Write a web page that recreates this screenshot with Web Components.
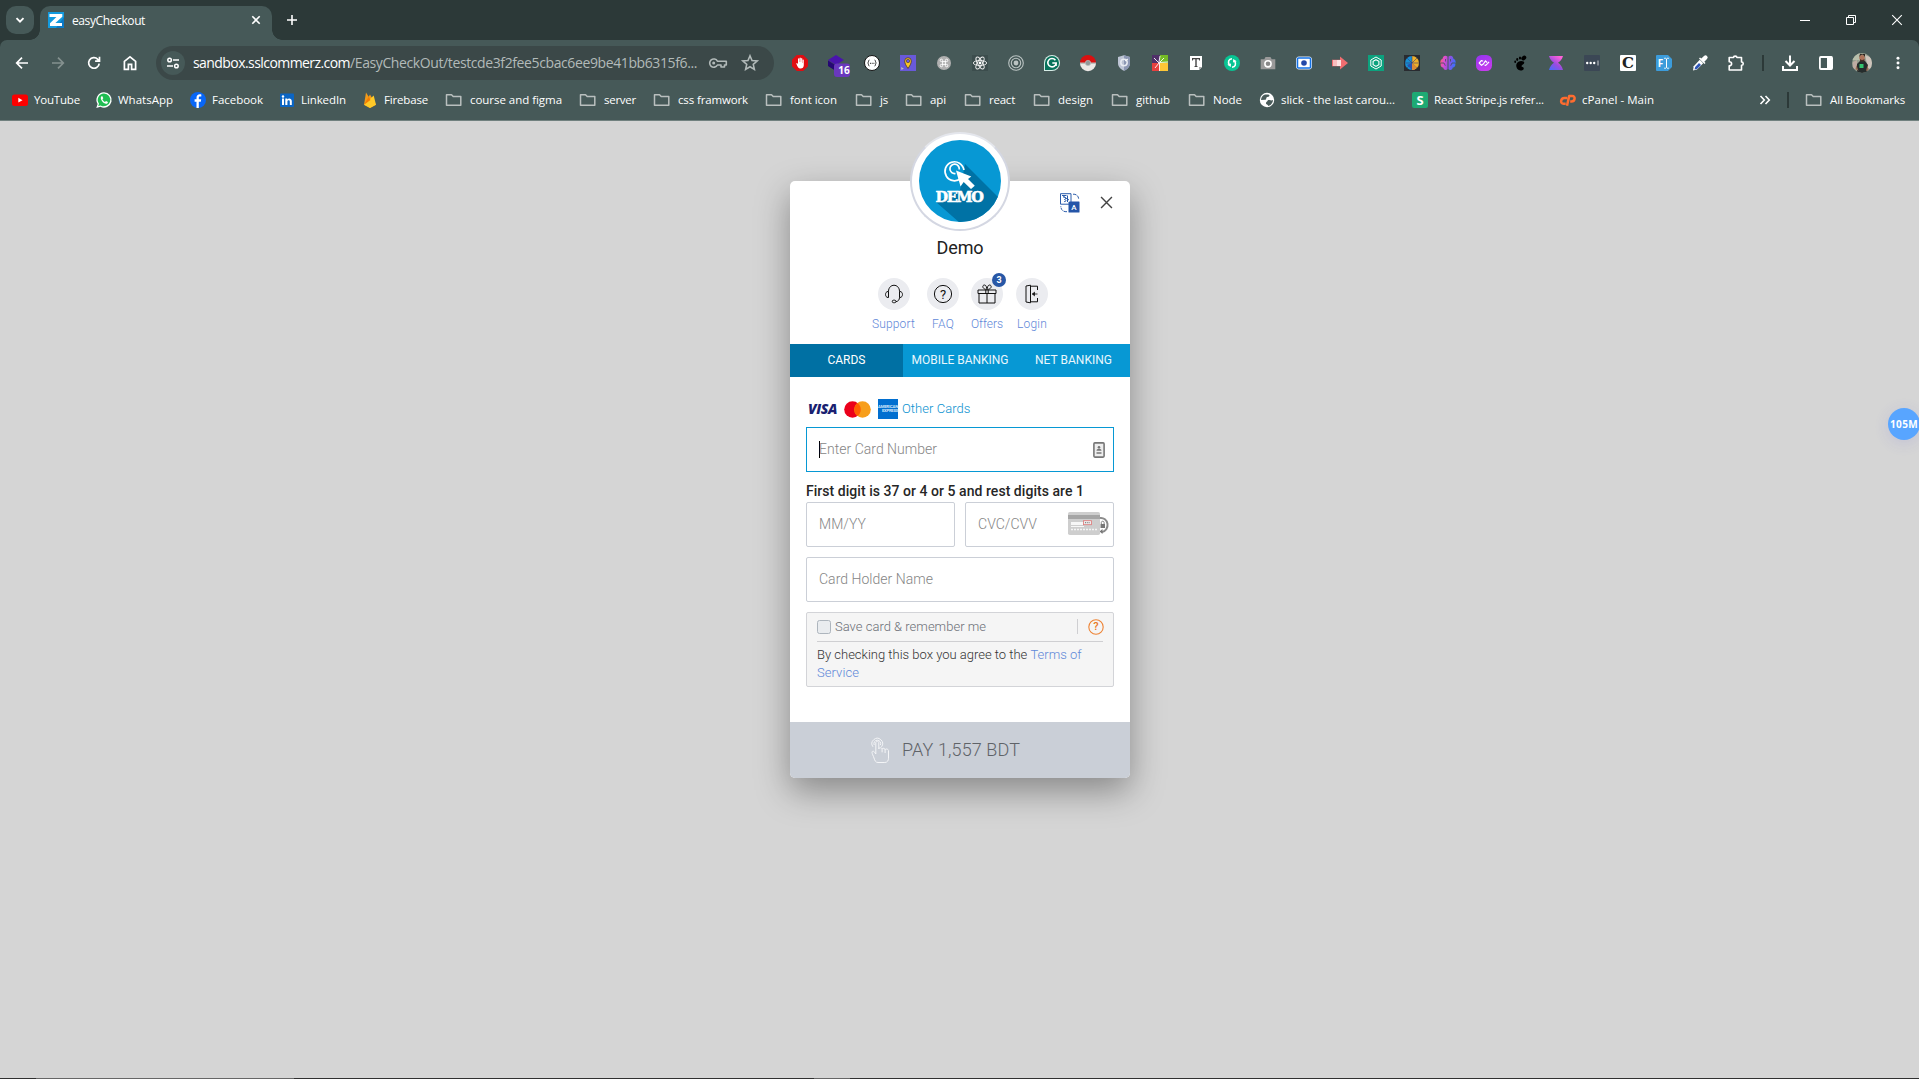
<!DOCTYPE html>
<html lang="en">
<head>
<meta charset="utf-8">
<title>easyCheckout</title>
<style>
html,body{margin:0;height:100%;overflow:hidden;background:#d5d5d5}
body{display:flex;flex-direction:column;font-family:Roboto,"Liberation Sans",sans-serif}
</style>
</head>
<body>
<browser-tabs></browser-tabs>
<browser-toolbar></browser-toolbar>
<bookmark-bar></bookmark-bar>
<checkout-page></checkout-page>
<task-edge></task-edge>
<script>
const P = (d, extra='') => `<path d="${d}" ${extra}/>`;
const line = 'fill="none" stroke="currentColor" ';
const ICONS = {
 chevron: ['0 0 16 16', P('M4.5 6.2 8 9.7l3.5-3.5', line+'stroke-width="1.9"')],
 z: ['0 0 16 16', '<rect width="16" height="16" fill="#139bdf"/><path d="M8 16h8V5z" fill="#0a79c5"/>'+P('M1.5 2h12.8v2.7L7.4 11H14v3H2v-2.7L8.4 5H1.5z','fill="#fff"')],
 x: ['0 0 16 16', P('M4.3 4.3l7.4 7.4M11.7 4.3l-7.4 7.4', line+'stroke-width="1.6"')],
 plus: ['0 0 16 16', P('M8 3v10M3 8h10', line+'stroke-width="1.6"')],
 min: ['0 0 16 16', P('M3 8.5h10', line+'stroke-width="1"')],
 max: ['0 0 16 16', P('M3.5 5.5h7v7h-7zM5.5 5.5v-2h7v7h-2', line+'stroke-width="1"')],
 wclose: ['0 0 16 16', P('M3.2 3.2l9.6 9.6M12.8 3.2l-9.6 9.6', line+'stroke-width="1.1"')],
 back: ['0 0 16 16', P('M14 8H3M8 2.7 2.7 8 8 13.3', line+'stroke-width="1.7"')],
 fwd: ['0 0 16 16', P('M2 8h11M8 2.7 13.3 8 8 13.3', line+'stroke-width="1.7"')],
 reload: ['0 0 16 16', P('M13.2 8.6A5.3 5.3 0 1 1 11.8 4.3L13.2 5.7M13.5 1.8v4.4H9.1', line+'stroke-width="1.7"')],
 home: ['0 0 16 16', P('M2.4 14.3V6.3L8 1.9l5.6 4.4v8h-4V9.4H6.4v4.9z', line+'stroke-width="1.7"')],
 tune: ['0 0 16 16', '<g '+line+'stroke-width="1.5"><circle cx="4.6" cy="5" r="1.8"/><path d="M8 5h6M2 11h6"/><circle cx="11.4" cy="11" r="1.8"/></g>'],
 key: ['0 0 20 16', P('M9.4 6.2A4.1 4.1 0 1 0 9.4 10H13v2h3.5v-2h1.8V6.2z', line+'stroke-width="1.6" stroke-linejoin="round"')+'<circle cx="5.7" cy="8" r="1.5" fill="currentColor"/>'],
 star: ['0 0 16 16', P('M8 1.6l1.8 4.2 4.6.4-3.5 3 1 4.5L8 11.3l-3.9 2.4 1-4.5-3.5-3 4.6-.4z', line+'stroke-width="1.4"')],
 adblock: ['0 0 16 16', P('M4.8 0h6.4L16 4.8v6.4L11.2 16H4.8L0 11.2V4.8z','fill="#e00d12"')+P('M4.2 8.5 5 8l1 1V3.8a.7.7 0 0 1 1.2 0V7h.3V3a.7.7 0 0 1 1.3 0v4h.3V3.6a.7.7 0 0 1 1.2 0V8h.3V5.2a.6.6 0 0 1 1.2 0v5c0 2-1.3 3.3-3.2 3.3-2 0-2.8-1.2-4.4-5z','fill="#fff"')],
 layers: ['0 0 24 24', P('M8 0l8 5-8 5-8-5z','fill="#4a14ad"')+P('M0 7l8 5V16L0 11z','fill="#210470"')+P('M0 5.500l8 5 3-2v5l-3 2-8-5z','fill="#260775"')+'<rect x="6" y="8.500" width="16" height="13.500" rx="3" fill="#6a38bd"/>'],
 braces: ['0 0 16 16','<circle cx="8" cy="8" r="7.500" fill="#fff" stroke="#151515"/><path d="M5.400 5c-1.300 0-.4 2.200-1.700 3 1.300.8.4 3 1.700 3M10.600 5c1.300 0 .4 2.200 1.700 3-1.300.8-.4 3-1.700 3" fill="none" stroke="#222" stroke-width=".9"/><path d="M6 8.300h4.400" stroke="#222" stroke-dasharray="1 .7"/>'],
 pin: ['0 0 16 16','<rect width="16" height="16" fill="#6959d9"/><path d="M8 13.5C5.7 10 4.7 8.3 4.7 6a3.3 3.3 0 0 1 6.6 0c0 2.3-1 4-3.3 7.5z" fill="#fbc723" stroke="#4c3826" stroke-width=".8"/><circle cx="8" cy="6" r="1.7" fill="#6959d9" stroke="#4c3826" stroke-width=".6"/><path d="M1 12l2.8 1.5L1.5 15z" fill="#bbb"/>'],
 cmd: ['0 0 16 16','<circle cx="8" cy="8" r="7" fill="#b0b0b0"/><path d="M6.600 6.600H5.400a1.200 1.200 0 1 1 1.200-1.200v5.200A1.200 1.200 0 1 1 5.400 9.400h5.200A1.200 1.200 0 1 1 9.400 10.600V5.400A1.200 1.200 0 1 1 10.600 6.600z" fill="none" stroke="#fff" stroke-width=".9"/>'],
 react: ['0 0 16 16','<rect width="16" height="16" fill="#3c4d4d"/><g fill="none" stroke="#f2f2f2" stroke-width=".9"><ellipse cx="8" cy="8" rx="6.7" ry="2.5"/><ellipse cx="8" cy="8" rx="6.7" ry="2.5" transform="rotate(60 8 8)"/><ellipse cx="8" cy="8" rx="6.7" ry="2.5" transform="rotate(120 8 8)"/></g><circle cx="8" cy="8" r="1.4" fill="#fff"/>'],
 target: ['0 0 16 16','<g fill="none" stroke="#bac3c2" stroke-width="1.1"><circle cx="8" cy="8" r="7.3"/><circle cx="8" cy="8" r="4.7"/></g><circle cx="8" cy="8" r="2.4" fill="#bac3c2"/>'],
 gram: ['0 0 16 16','<path d="M8 0a8 8 0 1 1 0 16H0V8a8 8 0 0 1 8-8z" fill="#d7ece6"/><path d="M8 1a7 7 0 1 1 0 14H1V8a7 7 0 0 1 7-7z" fill="#08725b"/><path d="M11.4 5.2A4.2 4.2 0 1 0 12.2 8H8.3M12.2 8l-.2 3" fill="none" stroke="#fff" stroke-width="1.6"/>'],
 poke: ['0 0 16 16','<path d="M0 8a8 8 0 0 1 16 0z" fill="#da1010"/><path d="M0 8.2a8 8 0 0 0 16 0z" fill="#ece8e6"/><path d="M0 8h16" stroke="#bababa"/><circle cx="8" cy="8" r="2.7" fill="#929899" stroke="#ccc" stroke-width=".5"/>'],
 shield: ['0 0 16 16','<path d="M8 .2 14 2v6c0 4-2.7 6.2-6 7.8C4.700 14.200 2 12 2 8V2z" fill="#bec5d5"/><path d="M8 .2 14 2v6c0 4-2.700 6.200-6 7.800z" fill="#8c97b3"/><circle cx="8" cy="7.500" r="3.200" fill="none" stroke="#e8ebf2" stroke-width="1.500"/><path d="M9 6l3-2" stroke="#fff"/>'],
 dots4: ['0 0 16 16','<path d="M0 0h8v8H0z" fill="#503069"/><path d="M8 0h8v8H8z" fill="#75bb26"/><path d="M0 8h8v8H0z" fill="#e7403f"/><path d="M8 8h8v8H8z" fill="#fec737"/><path d="M7 8 2 3M7 7l1-6M8 7l4-4M7 7.500l9-.5M7 8l-4 5M7.500 8v8" stroke="#fff" stroke-width=".9"/>'],
 tnote: ['0 0 16 16','<path d="M2 1h12v11l-3 3H2z" fill="#fff"/><path d="M14 12h-3v3z" fill="#aaa"/><path d="M4 3h8v2.500h-.8l-.5-1.300H8.700V11l1 .5v.6H6.300v-.6l1-.5V4.200H5.300l-.5 1.300H4z" fill="#444"/>'],
 sync: ['0 0 16 16','<circle cx="8" cy="8" r="8" fill="#08c493"/><g fill="none" stroke="#fff" stroke-width="1.600"><path d="M8 3.700C4.500 4 3.700 7 5.300 9.800M8 12.300c3.500-.3 4.300-3.300 2.700-6.100"/></g><path d="M3.300 9.700 7 8.500 6.800 12zM12.700 6.300 9 7.500 9.200 4z" fill="#fff"/>'],
 cam: ['0 0 16 16','<path d="M.7 4.200h3.600L5.500 2h5l1.200 2.200h3.600v10H.7z" fill="#9a9a9a"/><circle cx="8" cy="8.800" r="3.100" fill="#888" stroke="#fff" stroke-width="1.600"/>'],
 rec: ['0 0 16 16','<rect x=".6" y="2" width="14.800" height="12" rx="2" fill="#fff" stroke="#e5eefb"/><rect x="1.500" y="3" width="13" height="10" rx="1" fill="#fff" stroke="#1372e6" stroke-width="1.500"/><circle cx="8" cy="8" r="2.800" fill="#2348a8"/>'],
 rarrow: ['0 0 16 16','<path d="M0 4.700h8V1.500L16 8l-8 6.500v-3.200H0z" fill="#f16d70"/><path d="M1 5h4v6H1z" fill="#fff" opacity=".55"/><path d="M5 5h4v6H5z" fill="#fff" opacity=".8"/>'],
 gpt: ['0 0 16 16','<rect width="16" height="16" fill="#0ca27e"/><path d="M8 2l5.200 3v6L8 14l-5.200-3V5z" fill="none" stroke="#fff" stroke-width="1"/><path d="M8 4.700l2.900 1.700v3.300L8 11.400 5.100 9.700V6.400z" fill="none" stroke="#fff" stroke-width="1.100"/>'],
 ball: ['0 0 16 16','<rect width="16" height="16" fill="#292b30"/><path d="M8 1v14A7 7 0 0 1 8 1z" fill="#168ed2"/><path d="M8 1v14A7 7 0 0 0 8 1z" fill="#edb12b"/><path d="M3 3l10 10M13 3L3 13M1 8h14M8 1v14" stroke="#3d3e71" stroke-width=".6"/><path d="M8 8l5 4-3 3H8z" fill="#d78a37"/><path d="M3 10l5-2v7z" fill="#2751b0"/>'],
 brain: ['0 0 16 16','<defs><linearGradient id="b" x1="0" x2="1" y2=".2"><stop stop-color="#fc655a"/><stop offset=".3" stop-color="#de4ed0"/><stop offset=".6" stop-color="#994bdd"/><stop offset="1" stop-color="#406ffb"/></linearGradient></defs><path d="M7.500 1.500C5 0 3 1 2.700 3.500.5 4.500-.2 7 .8 8.500 0 11 2 12.500 3.200 12.500 4 15.500 6.500 15.500 7.500 14zM8.500 1.500C11 0 13 1 13.300 3.500c2.200 1 2.900 3.500 1.900 5 .8 2.500-1.200 4-2.400 4-.8 3-3.300 3-4.300 1.500z" fill="url(#b)"/><path d="M5.500 4v2.500M1 8h3l1.300 2.700M10.500 4v2.500M15 8h-3l-1.300 2.700" fill="none" stroke="#42505a" stroke-width=".8"/>'],
 loop: ['0 0 16 16','<defs><linearGradient id="l" x2=".4" y2="1"><stop stop-color="#9334ef"/><stop offset="1" stop-color="#c43cee"/></linearGradient></defs><rect width="16" height="16" rx="5.500" fill="url(#l)"/><path d="M7.200 6.200 5.500 5.500 3.200 8l2.300 2.300L7.300 9 9.500 5.800 11 7.500M8.500 10l1.200.4 1.800-1.800L13 6.800" fill="none" stroke="#fff" stroke-width="1.200" stroke-linejoin="round"/>'],
 foot: ['0 0 16 16','<g fill="#000"><ellipse cx="11.800" cy="3" rx="2.700" ry="2.100" transform="rotate(-40 11.800 3)"/><ellipse cx="8" cy="3" rx="1.100" ry="1.600"/><ellipse cx="5.200" cy="4.500" rx="1" ry="1.400"/><ellipse cx="3.200" cy="6.700" rx=".9" ry="1.200"/><path d="M11.500 6.500C9 5 5.500 6.500 4.500 9c-1 3 1 6.500 4 6.500 2 0 3.500-1 3.200-2.500-.4-1.200-2-.5-2.200-1.700-.3-1.800 4.600-2.800 2-4.800z"/></g>'],
 hour: ['0 0 16 16','<defs><linearGradient id="h" y1="1" x2=".7" y2="0"><stop stop-color="#416dff"/><stop offset=".5" stop-color="#9a4be0"/><stop offset="1" stop-color="#ff62d9"/></linearGradient></defs><path d="M1 1h14C14 4.500 12.500 6 10 7.800 12.500 9.500 14 11.500 15 15H1c1-3.500 2.500-5.500 5-7.200C3.500 6 2 4.500 1 1z" fill="url(#h)"/>'],
 pass: ['0 0 16 16','<rect width="16" height="16" rx="1" fill="#3b4755"/><g fill="#fff"><circle cx="3.200" cy="8" r="1.200"/><circle cx="6.700" cy="8" r="1.200"/><circle cx="10.200" cy="8" r="1.200"/><path d="M13.500 5.500h1v5h-1z" opacity=".7"/></g>'],
 cbox: ['0 0 16 16','<rect width="16" height="16" rx="1" fill="#fff"/>'],
 fi: ['0 0 16 16','<path d="M1 0h11l4 4v8l-4 4H1a1 1 0 0 1-1-1V1a1 1 0 0 1 1-1z" fill="#3c9cdb"/><path d="M8.200 3.300h1.500l.8.700.8-.7h1.500M8.200 13.200h1.500l.8-.7.8.7h1.500M10.500 4v8.500" fill="none" stroke="#fff" stroke-width="1"/>'],
 dropper: ['0 0 16 16','<path d="M7.800 4.800 11.200 8.200 5 14.500 1 15.500 1.700 11.300z" fill="#fff"/><path d="M7 8l2 2-4 4-2.500.5.700-2.500z" fill="#2d55b8"/><path d="M7 3.500 12.500 9l1-1-1.200-1.200L15 4a2 2 0 0 0-3-3L9.300 3.600 8 2.500z" fill="#fff"/>'],
 puzzle: ['0 0 16 16', P('M1.200 2.500h4.300C5.500.6 8.900.6 8.900 2.500h4.600V7c2.300 0 2.300 3.300 0 3.300V15H1.200v-4.200c3.200 0 3.200-4 0-4z', line+'stroke-width="1.600" stroke-linejoin="round"')],
 download: ['0 0 16 16', P('M8 .5v10M3.500 6 8 10.500 12.500 6M1 11v4h14v-4', line+'stroke-width="2"')],
 panel: ['0 0 16 16', '<rect x="1.900" y="2" width="12.200" height="12" rx="1" '+line+'stroke-width="1.800"/><path d="M9 1.500h5v13H9z" fill="currentColor"/>'],
 avatar: ['0 0 20 20','<defs><clipPath id="av"><circle cx="10" cy="10" r="10"/></clipPath></defs><g clip-path="url(#av)"><path d="M0 0h20v20H0z" fill="#98a190"/><path d="M0 0h8v7H0z" fill="#b9c0ac"/><path d="M1 9l4-2v9H0z" fill="#bdaca3"/><path d="M13 2l7 3v12l-4-2z" fill="#cec4bb"/><path d="M5 20V11l3-3h5l3 4-1 8z" fill="#252c2c"/><circle cx="10" cy="4.700" r="2.800" fill="#ae735a"/><path d="M7 4q3.500-5 6 0v-3H8z" fill="#302720"/><path d="M8 6q2 2 4.500 0v2.500H8z" fill="#463027"/><path d="M7.500 11h4v4h-4z" fill="#34c46f"/><path d="M4.500 12l2 6-3-2zM15.500 12l1 5-2.500 1z" fill="#976b54"/></g>'],
 dots: ['0 0 16 16','<g fill="currentColor"><circle cx="8" cy="2.500" r="1.700"/><circle cx="8" cy="8" r="1.700"/><circle cx="8" cy="13.500" r="1.700"/></g>'],
 youtube: ['0 0 16 16','<rect y="2.500" width="16" height="11.500" rx="2.500" fill="#fb0000"/><path d="M6.300 5.800 10.500 8.200 6.300 10.600z" fill="#fff"/>'],
 whatsapp: ['0 0 16 16','<path d="M8 .2A7.700 7.700 0 1 1 4.400 14.700L.3 16l1.300-4A7.700 7.700 0 0 1 8 .2z" fill="#fff"/><path d="M8 1.500A6.400 6.400 0 1 1 4.600 13.400L2.200 14.100 3 11.700A6.400 6.400 0 0 1 8 1.500z" fill="#20bd52"/><path d="M5.700 4.300c-2.300 1 .1 6.800 4.200 7.500 1.300.1 2.100-.8 2-1.900L10 9l-1 1c-1.300-.5-2.200-1.500-2.600-2.700l.9-1-.9-2z" fill="#fff"/>'],
 facebook: ['0 0 16 16','<circle cx="8" cy="8" r="8" fill="#0866f6"/><path d="M6.500 16V9.800H4.600V7.300h1.900V6c0-2.600 1.300-3.700 3.300-3.700.8 0 1.200.1 1.500.2v2.100H10c-.9 0-1.200.4-1.200 1.300v1.400h2.400l-.4 2.500h-2V16z" fill="#fff"/>'],
 linkedin: ['0 0 16 16','<rect x="1" y="1.500" width="14" height="13.500" rx="1" fill="#0b65c3"/><g fill="#fff"><path d="M3 6.500h2V13H3zM6.300 6.500h2v.9c1.200-1.700 4.500-1.200 4.500 1.700V13h-2V9.500c0-1.700-2.400-1.700-2.400 0V13H6.300z"/><circle cx="4" cy="4.500" r="1.200"/></g>'],
 firebase: ['0 0 16 16','<path d="M2 12.700 4 .5l2.700 4.200L8 2.500l6 10.200-6 3.200z" fill="#f29a19"/><path d="M2 12.700 11.700 3.500 14 12.700 8 16z" fill="#ffca28"/><path d="M2 12.700 6.700 4.700 8.500 8z" fill="#f57c00"/>'],
 folder: ['0 0 18 16', P('M1.500 2.700h5l1.700 1.900h7.600v8.600H1.500z', line+'stroke-width="1.500" stroke-linejoin="round"')],
 globe: ['0 0 16 16','<circle cx="8" cy="8" r="7.200" fill="#fff"/><path d="M6 2.500c2 .3 4-.5 4.500 1-.3 1.800-2.500 1-3 2.200-.7 1 .2 1.700-1.200 2L2 8c.2-2.800 1.700-4.800 4-5.500zM9 8c2.500-.3 3 1 5 0-.2 3-2 5.300-4.700 6-.3-2-2.500-1-2.300-3 .2-1.500 1-.7 2-3z" fill="#4a5c5b"/>'],
 sbox: ['0 0 16 16','<rect width="16" height="16" rx="2" fill="#1eaa74"/>'],
 cp: ['0 0 16 16','<g fill="none" stroke="#ff6c2f" stroke-width="2.500" stroke-linejoin="round"><path d="M7.200 6H4.400C.5 6-.1 11.800 3.500 11.800h2.200M7 13.700 9.200 4h3c3.800 0 2.800 5.600-.8 5.600h-1.200"/></g>'],
 more: ['0 0 16 16', P('M3.500 4 7.300 8l-3.800 4M8.500 4l3.800 4-3.800 4', line+'stroke-width="1.600"')],
 demo: ['0 0 82 82','<defs><clipPath id="dc"><circle cx="41" cy="41" r="41"/></clipPath></defs><g clip-path="url(#dc)"><path d="M0 0h82v82H0z" fill="#0798d4"/><path d="M46 24 L84 62V90H49L17 62l24-12z" fill="#0072a5"/></g><g fill="none" stroke="#fff" stroke-width="1.700"><path d="M42.500 38.200A9.500 9.500 0 1 1 45.400 30" transform="translate(-.5 0)"/><path d="M36.500 33.500A4.700 4.700 0 1 1 40.300 29.500"/></g><path d="M37 30.500 41.500 46.500 44.700 42 52 49 55.800 45.700 49 39 52.300 36.600z" fill="#fff"/>'],
 translate: ['0 0 20 20','<g fill="none" stroke="#2b5caa" stroke-width="1"><path d="M.5.700h10.500v10.500H.5zM2 2.500h4.500M7.500 2.500v6.500M3 4c3-.5 3.500 2 1.500 2.500 2 .2 2 2.500-.5 2M3.500 3.500 9 7"/><path d="M13 1.200c3.600-.2 5.700 2 5.700 5.300M7 18.700c-4 .3-6.200-2-6.200-5.700" stroke-dasharray="3.500 1"/></g><path d="M9.500 8.500H19a.5.500 0 0 1 .5.500v10a.5.500 0 0 1-.5.500H9a.5.500 0 0 1-.5-.5V9.500z" fill="#2455a8"/>'],
 close: ['0 0 16 16', P('M2.200 2.200l11.600 11.600M13.800 2.200 2.200 13.800', 'fill="none" stroke="#444" stroke-width="1.500"')],
 headset: ['0 0 20 20', P('M4.500 13.500H4C.7 13.500.7 7.500 4 7.500h.5zM15.500 7.500h.5c3.300 0 3.300 6 0 6h-.5zM4.500 7.500c0-8.300 11-8.300 11 0M15.500 13.500c0 2.300-1.300 3.800-3.500 4.200', line+'stroke-width="1"')+'<rect x="8.300" y="16.200" width="3.600" height="2.500" rx="1.200" '+line+'/>'],
 faq: ['0 0 20 20', '<circle cx="10" cy="10" r="8.600" '+line+'stroke-width="1"/>'],
 gift: ['0 0 20 20', P('M1 6h18v3.500H1zM2 9.500h16V19H2zM10 9.500V19M9.500 5.500C5 5 5 1 7.500 1 9.300 1 9.800 4 10 5.500 10.200 4 10.700 1 12.500 1c2.500 0 2.500 4-2 4.500M8.800 6v3.500M11.200 6v3.500', line+'stroke-width="1"')],
 door: ['0 0 20 20', P('M4 2 8.500 1.200v17.600L4 18zM9 2.200h6.500V6M9 17.800h6.500V14', line+'stroke-width="1"')+P('M10 10H15.500M12.500 8.200 10.500 10l2 1.800z','fill="currentColor" stroke="currentColor" stroke-width=".800"')],
 mc: ['0 0 27 17','<circle cx="8.500" cy="8.500" r="8.300" fill="#eb001b"/><circle cx="18.500" cy="8.500" r="8.300" fill="#f79e1b"/><path d="M13.500 1.900a8.300 8.300 0 0 1 0 13.200 8.300 8.300 0 0 1 0-13.200z" fill="#ff5f00"/>'],
 contact: ['0 0 12 16','<rect x=".9" y=".9" width="10.200" height="14.200" rx="1" fill="#eee" stroke="#777" stroke-width="1.600"/><circle cx="6" cy="5.300" r="1.300" fill="#777"/><path d="M3.500 8.700c0-2.600 5-2.600 5 0zM3.500 10.200h5v1.500h-5z" fill="#777"/>'],
 cvv: ['0 0 42 26','<path d="M32 6A6.500 7 0 1 1 34 20" fill="none" stroke="#8b8b8b" stroke-width="2"/><path d="M34.500 17v5l-3-2.500z" fill="#777"/><rect width="32" height="23" rx="1.800" fill="#cecece"/><path d="M0 3h32v4H0z" fill="#a5a5a5"/><path d="M3 10h13v3H3zM3 14h13v1H3z" fill="#f7f7f7"/><path d="M3 17.500h26" stroke="#f5f5f5" stroke-width="1.500" stroke-dasharray="2 1"/><rect x="15.500" y="8.700" width="8" height="4" fill="#eee" stroke="#de7777" stroke-width=".800"/><path d="M17 10.700h5" stroke="#888" stroke-width="1.200" stroke-dasharray="1 .8"/><path d="M32.500 12h4.500v4h-4.500z" fill="#777"/><path d="M33.300 12v-1.500c0-1.700 2.800-1.700 2.800 0V12" fill="none" stroke="#777" stroke-width=".900"/>'],
 help: ['0 0 16 16','<circle cx="8" cy="8" r="7.200" fill="none" stroke="#ee8334" stroke-width="1.100"/>'],
 tap: ['0 0 20 26','<g fill="none" stroke="#f4f5f7" stroke-width="1"><path d="M5.800 17V5.800c0-2 3-2 3 0V12c0-1.700 3.300-1.700 3.300.3 0-1.600 3-1.400 3 .6 0-1.500 3.400-1.200 3.400.8v7.500c0 2.400-1.300 4.300-3.700 4.300H8c-2.500 0-3.200-2-4-4.500-.8-2.300-2-4.500-2-5.700 0-1.500 2-1.500 2.700.2z"/><path d="M12.100 12.300v3M15.100 13v3M3 9.800A5.300 5.300 0 1 1 11.500 9.800M4.200 8a3.400 3.400 0 1 1 6.200 0"/></g>']
};
class UiIcon extends HTMLElement{
 connectedCallback(){
  if(this.shadowRoot) return;
  const [vb,body]=ICONS[this.getAttribute('name')];
  const w=this.getAttribute('w')||16,h=this.getAttribute('h')||w;
  const ch=this.getAttribute('text');
  this.attachShadow({mode:'open'}).innerHTML=`<style>:host{display:grid;flex:none;width:${w}px;height:${h}px;place-items:center}svg,span{grid-area:1/1;display:block}svg{overflow:visible}span{line-height:1;z-index:1}</style><svg width="${w}" height="${h}" viewBox="${vb}">${body}</svg>${ch?`<span style="${this.getAttribute('tstyle')||''}">${ch}</span>`:''}`;
 }
}
/* Single-line label that adjusts its tracking to fill a given width. */
class FitText extends HTMLElement{
 connectedCallback(){
  if(this.shadowRoot) return;
  this.attachShadow({mode:'open'}).innerHTML='<style>:host{display:block;flex:none;white-space:pre}span{display:inline-block}</style><span><slot></slot></span>';
  const s=this.shadowRoot.querySelector('span'),w=+this.getAttribute('w'),n=this.textContent.length;
  this.style.width=w+'px';
  s.style.letterSpacing=((w-s.getBoundingClientRect().width)/n).toFixed(3)+'px';
 }
}
const define=(name,css,html)=>customElements.define(name,class extends HTMLElement{
 connectedCallback(){ if(!this.shadowRoot) this.attachShadow({mode:'open'}).innerHTML=`<style>*{box-sizing:border-box}${css}</style>${html}`; }
});
const ui='font-family:"Open Sans","Noto Sans",sans-serif;';

define('browser-tabs',`:host{display:flex;height:40px;flex:none;background:#2c3938;color:#fff;${ui}padding-left:6px;box-sizing:border-box}
.s{width:28px;height:28px;border-radius:10px;background:#465958;display:grid;place-items:center;margin:6px 6px 0 0}
.t{position:relative;width:232px;height:34px;margin-top:6px;border-radius:10px 10px 0 0;background:#465958;display:flex;align-items:center;padding:0 8px 6px;font-size:12px}
.t fit-text{margin:1px auto 0 8px}
.t:before,.t:after{content:"";position:absolute;bottom:0;width:10px;height:10px}
.t:before{left:-10px;background:radial-gradient(circle at 0 0,transparent 9.5px,#465958 10px)}
.t:after{right:-10px;background:radial-gradient(circle at 100% 0,transparent 9.5px,#465958 10px)}
.p{margin:12px auto 0 12px}.w{display:flex;gap:30px;padding:12px 14px 0 0}`,
`<div class="s"><ui-icon name="chevron"></ui-icon></div><div class="t"><ui-icon name="z"></ui-icon><fit-text w="73">easyCheckout</fit-text><ui-icon name="x"></ui-icon></div><ui-icon class="p" name="plus"></ui-icon><div class="w"><ui-icon name="min"></ui-icon><ui-icon name="max"></ui-icon><ui-icon name="wclose"></ui-icon></div>`);

const ext=['adblock','layers','braces','pin','cmd','react','target','gram','poke','shield','dots4','tnote','sync','cam','rec','rarrow','gpt','ball','brain','loop','foot','hour','pass','cbox','fi','dropper','puzzle'];
const extra={cbox:'text="C" tstyle="font:bold 15px \'DejaVu Serif\',serif;color:#222;line-height:1"',fi:'text="F" tstyle="font:bold 10px \'Open Sans\',sans-serif;color:#fff;line-height:1;padding-right:7px"'};
define('browser-toolbar',`:host{display:block;flex:none;background:#2c3938}
.r{height:46px;display:flex;align-items:center;background:#465958;border-radius:7px 7px 0 0;color:#fff;${ui}padding-left:4px}
.c{width:36px;display:grid;place-items:center;flex:none;position:relative}
.u{width:618px;height:34px;border-radius:17px;background:#3b4848;margin:0 8px;display:flex;align-items:center;padding-left:5px;font-size:14px;color:#b2bab9}
.i{width:24px;height:24px;border-radius:50%;background:#465958;display:grid;place-items:center;margin-right:8px;color:#fff}
.h{color:#fff}.u fit-text{margin-top:-1px}.k{margin:0 13px 0 11px}
.n{position:absolute;left:18px;top:17px;width:16px;text-align:center;font:bold 10px "Open Sans",sans-serif;line-height:13px;color:#fff}
.sep{width:2px;height:16px;background:#2c3938;margin:0 8px}`,
`<div class="r"><div class="c"><ui-icon name="back"></ui-icon></div><div class="c" style="color:#84918f"><ui-icon name="fwd"></ui-icon></div><div class="c"><ui-icon name="reload"></ui-icon></div><div class="c"><ui-icon name="home"></ui-icon></div>
<div class="u"><div class="i"><ui-icon name="tune"></ui-icon></div><fit-text class="h" w="157">sandbox.sslcommerz.com</fit-text><fit-text w="347">/EasyCheckOut/testcde3f2fee5cbac6ee9be41bb6315f6...</fit-text><ui-icon class="k" name="key" w="20" h="16"></ui-icon><ui-icon name="star" w="18"></ui-icon></div>
${ext.map(e=>`<div class="c">${e==='layers'?'<ui-icon name="layers" w="24" style="margin:8px 0 0 8px"></ui-icon><span class="n">16</span>':`<ui-icon name="${e}" ${extra[e]||''}></ui-icon>`}</div>`).join('')}
<div class="sep"></div><div class="c"><ui-icon name="download"></ui-icon></div><div class="c"><ui-icon name="panel"></ui-icon></div><div class="c"><ui-icon name="avatar" w="20"></ui-icon></div><div class="c"><ui-icon name="dots" w="14"></ui-icon></div></div>`);

const marks=[['youtube','YouTube',12,34,46],['whatsapp','WhatsApp',96,118,55],['facebook','Facebook',190,212,51],['linkedin','LinkedIn',279,301,45],['firebase','Firebase',362,384,44],['folder','course and figma',445,470,92],['folder','server',579,604,32],['folder','css framwork',653,678,70],['folder','font icon',765,790,47],['folder','js',855,880,8],['folder','api',905,930,16],['folder','react',964,989,26],['folder','design',1033,1058,35],['folder','github',1111,1136,34],['folder','Node',1188,1213,29],['globe','slick - the last carou...',1259,1281,114],['sbox','React Stripe.js refer...',1412,1434,110],['cp','cPanel - Main',1560,1582,72]];
define('bookmark-bar',`:host{display:flex;box-sizing:border-box;height:35px;flex:none;align-items:center;background:#465958;border-bottom:1px solid #71817f;color:#fff;${ui}font-size:11.500px;padding:0 14px 6px 12px}
.m{display:flex;align-items:center;flex:none}fit-text{margin-top:-2px}ui-icon[name=folder]{color:#b9bfbe}.e{margin-left:auto;display:flex;align-items:center}.v{width:2px;height:16px;background:#2c3938;margin:0 16px 0 14px}`,
marks.map(([i,t,x,tx,w],k)=>`<div class="m" style="width:${(marks[k+1]||[0,0,1680])[2]-x}px;gap:${tx-x-(i==='folder'?18:16)}px"><ui-icon name="${i}" w="${i==='folder'?18:16}" h="16" ${i==='sbox'?'text="S" tstyle="font:bold 13px \'Open Sans\',sans-serif;line-height:1;color:#fff"':''}></ui-icon><fit-text w="${w}">${t}</fit-text></div>`).join('')+
`<div class="e"><ui-icon name="more"></ui-icon><div class="v"></div><ui-icon name="folder" w="18" h="16" style="margin-right:7px"></ui-icon><fit-text w="75">All Bookmarks</fit-text></div>`);

define('round-action',`:host{display:flex;flex-direction:column;align-items:center;color:#111;position:relative}.b{width:32px;height:32px;border-radius:50%;background:#ebecf0;display:grid;place-items:center}::slotted(fit-text){margin-top:6px;font-size:12px;line-height:16px;font-weight:350;color:#5f88d8}::slotted(b){position:absolute;left:21px;top:-5px;width:14px;height:14px;border-radius:50%;background:#2857a6;color:#fff;font-size:9px;line-height:14px;text-align:center}`,
`<div class="b"><slot name="icon"></slot></div><slot></slot>`);
define('text-field',`:host{display:flex;align-items:center;box-sizing:border-box;height:45px;border:1px solid #cbcfd7;border-radius:2px;padding:0 8px 0 12px;color:#858585;font-size:14px;font-weight:300;background:#fff}:host([focused]){border-color:#0798d4;border-radius:0}::slotted(fit-text){margin-top:-2px}i{display:none;width:1px;height:17px;background:#000;margin-right:-1px}:host([focused]) i{display:block}slot[name=end]{display:block;margin-left:auto}`,
`<i></i><slot></slot><slot name="end"></slot>`);
define('checkout-card',`:host{display:flex;flex-direction:column;width:340px;height:597px;margin-top:60px;background:#fff;border-radius:5px;box-shadow:0 13px 34px rgba(0,0,0,.36);position:relative;color:#333;box-sizing:border-box}
.logo{position:absolute;left:120px;top:-49px;width:100px;height:99px;border-radius:50%;background:#fff;border:2px solid #d4d7e2;border-top-color:#e4e6ec;display:grid;place-items:center;padding-bottom:2px}
.top{height:50px;display:flex;justify-content:flex-end;padding:12px 16px 0 0;gap:19px}
.name{font-size:18px;line-height:22px;margin:6px auto 0;color:#222}
.acts{display:flex;padding:19px 0 0 82px;height:85px}
.tabs{display:flex;height:33px;background:#0798d4;color:#e9f7fd;font-size:12px;font-weight:430;line-height:32px;flex:none}
.tabs div{display:flex;justify-content:center}.tabs .a{width:113px;background:#0070a3;color:#fff;font-weight:450}
.body{padding:22px 16px 0;display:flex;flex-direction:column;height:345px}
.brands{display:flex;align-items:center;height:20px;margin-bottom:8px;font-size:13px;color:#0b92d0}
.oc{margin-top:-2px;font-weight:350}
.visa{font:italic 800 14px "Open Sans",sans-serif;color:#1a1f71;line-height:14px;margin:0 7px 0 2px}
.amex{width:20px;height:20px;background:#016fd0;margin:0 4px 0 7px;color:#d4e7fa;font-size:4.200px;line-height:4px;padding-top:6px;font-weight:700}
.amex fit-text+fit-text{margin-left:4px}
.hint{font-weight:500;font-size:14px;line-height:18px;margin:10px 0 2px;color:#262626}
.two{display:grid;grid-template-columns:1fr 1fr;gap:10px;margin-bottom:10px}
.save{margin-top:10px;height:75px;background:#f5f5f5;border:1px solid #d3d4d8;border-radius:2px;padding:6px 10px;font-size:13px;font-weight:300;line-height:18px}
.row{display:flex;align-items:center;height:23px;border-bottom:1px solid #cfcfd2;margin-bottom:4px;padding-bottom:7px;color:#6c7077}
.cb{width:14px;height:14px;border:1px solid #adb5bd;border-radius:2.500px;background:#e9ecef;margin-right:4px}
.v{width:1px;height:15px;background:#cfcfd2;margin:0 10px 0 auto}.l{display:flex}.lk{color:#6088d8}
.pay{height:56px;background:#cacfd7;border-radius:0 0 5px 5px;display:flex;align-items:center;padding-left:80px;font-size:18px;font-weight:350;color:#5f6368;flex:none}.pay fit-text{margin-top:-2px}`,
`<div class="logo"><ui-icon name="demo" w="82" text="DEMO" tstyle="font:900 14.500px 'DejaVu Serif','Liberation Serif',serif;line-height:1;color:#fff;letter-spacing:-1.300px;-webkit-text-stroke:.5px #fff;padding-top:33px;margin-left:-2px"></ui-icon></div>
<div class="top"><ui-icon name="translate" w="20" text="A" tstyle="font:500 8px Roboto,sans-serif;line-height:1;color:#fff;padding:9px 0 0 8px"></ui-icon><ui-icon name="close" w="15" style="margin-top:2px"></ui-icon></div>
<fit-text class="name" w="47">Demo</fit-text>
<div class="acts">
<round-action style="width:43px"><ui-icon slot="icon" name="headset" w="20"></ui-icon><fit-text w="43">Support</fit-text></round-action>
<round-action style="width:32px;margin-left:12px"><ui-icon slot="icon" name="faq" w="20" text="?" tstyle="font:400 13px Roboto,sans-serif;line-height:1"></ui-icon><fit-text w="22">FAQ</fit-text></round-action>
<round-action style="width:32px;margin-left:12px"><ui-icon slot="icon" name="gift" w="20"></ui-icon><fit-text w="32">Offers</fit-text><b>3</b></round-action>
<round-action style="width:32px;margin-left:13px"><ui-icon slot="icon" name="door" w="20"></ui-icon><fit-text w="30">Login</fit-text></round-action></div>
<div class="tabs"><div class="a"><fit-text w="38">CARDS</fit-text></div><div style="width:114px"><fit-text w="97">MOBILE BANKING</fit-text></div><div style="width:113px"><fit-text w="77">NET BANKING</fit-text></div></div>
<div class="body"><div class="brands"><fit-text class="visa" w="29">VISA</fit-text><ui-icon name="mc" w="27" h="17"></ui-icon><div class="amex"><fit-text w="20">AMERICAN</fit-text><fit-text w="16">EXPRESS</fit-text></div><fit-text class="oc" w="68.500">Other Cards</fit-text></div>
<text-field focused><fit-text w="118">Enter Card Number</fit-text><ui-icon slot="end" name="contact" w="12" h="16"></ui-icon></text-field>
<fit-text class="hint" w="278">First digit is 37 or 4 or 5 and rest digits are 1</fit-text>
<div class="two"><text-field><fit-text w="47">MM/YY</fit-text></text-field><text-field style="padding-right:3px"><fit-text w="59">CVC/CVV</fit-text><ui-icon slot="end" name="cvv" w="42" h="26"></ui-icon></text-field></div>
<text-field><fit-text w="114">Card Holder Name</fit-text></text-field>
<div class="save"><div class="row"><span class="cb"></span><fit-text w="151">Save card &amp; remember me</fit-text><span class="v"></span><ui-icon name="help" w="16" style="margin-right:-1px" text="?" tstyle="font:500 11px Roboto,sans-serif;line-height:1;color:#e97823"></ui-icon></div><div class="l"><fit-text w="213.500">By checking this box you agree to the </fit-text><fit-text class="lk" w="51">Terms of</fit-text></div><fit-text class="lk" w="42">Service</fit-text></div></div>
<div class="pay"><ui-icon name="tap" w="20" h="26" style="margin-right:12px"></ui-icon><fit-text w="118">PAY 1,557 BDT</fit-text></div>`);
define('memory-badge',`:host{position:absolute;left:1888px;top:287px;width:32px;height:32px;border-radius:50%;background:#58a5ff;color:#fff;display:grid;place-items:center;font:700 10px "Open Sans",sans-serif;padding-bottom:1px;box-sizing:border-box;box-shadow:0 3px 15px rgba(80,80,220,.14)}`,`<fit-text w="28">105M</fit-text>`);
define('checkout-page',`:host{flex:1;display:flex;justify-content:center;align-items:flex-start;position:relative;background:#d5d5d5;min-height:0;overflow:hidden}checkout-card{margin-left:1px}`,`<checkout-card></checkout-card><memory-badge></memory-badge>`);
define('task-edge',`:host{display:flex;flex:none;height:1px;background:#303030}i{height:1px;background:#666}.a{width:258px;margin-left:36px}.b{width:36px;margin-left:520px}`,`<i class="a"></i><i class="b"></i>`);
customElements.define('ui-icon',UiIcon);
customElements.define('fit-text',FitText);
</script>
</body>
</html>
